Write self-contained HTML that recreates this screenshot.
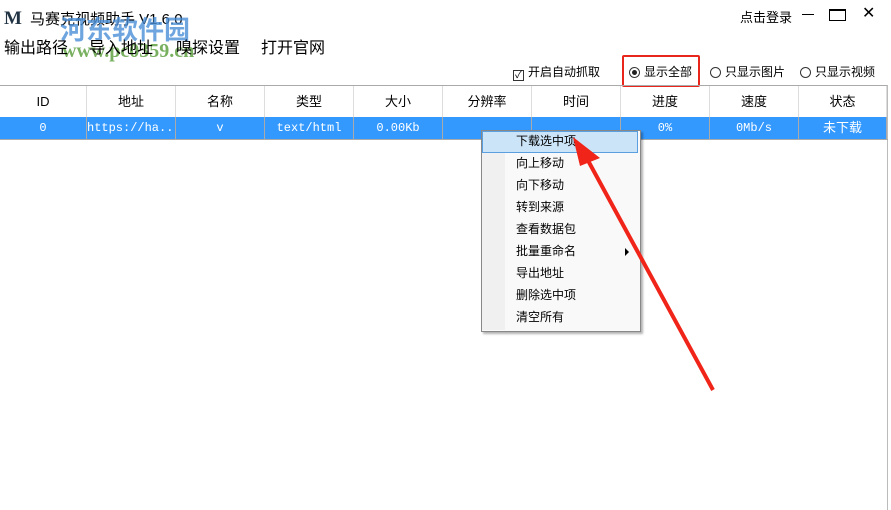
<!DOCTYPE html>
<html><head><meta charset="utf-8"><style>
body{margin:0;width:891px;height:510px;background:#fff;position:relative;overflow:hidden;font-family:"Liberation Sans","Noto Sans CJK SC",sans-serif;color:#000}
.a{position:absolute;white-space:nowrap}
.m{font-size:16px}
.hd{position:absolute;top:86px;height:31px;line-height:31px;text-align:center;font-size:13px;border-right:1px solid #ddd;box-sizing:border-box}
.rw{position:absolute;top:117px;height:22px;line-height:22px;text-align:center;font-size:12px;color:#fff;background:#3399ff;border-right:1px solid #aaa;box-sizing:border-box;font-family:"Liberation Mono","Noto Sans CJK SC",monospace}
.mi{position:absolute;left:516px;font-size:12px;height:22px;line-height:22px}
.rd{display:inline-block;width:11px;height:11px;border:1px solid #333;border-radius:50%;vertical-align:-2px;margin-right:4px;box-sizing:border-box;position:relative}
</style></head><body>
<div class="a" style="left:4px;top:8px;font-size:19px;font-weight:bold;font-family:'Liberation Serif',serif;color:#234">M</div>
<div class="a" style="left:30px;top:8px;font-size:15px">马赛克视频助手 V1.6.0</div>
<div class="a" style="left:60px;top:10px;font-size:26px;font-weight:bold;color:#4a8fd8;opacity:.8">河东软件园</div>
<div class="a" style="left:62px;top:40px;font-size:20px;font-weight:bold;color:#6aa84f;font-family:'Liberation Serif',serif;opacity:.9">www.pc0359.cn</div>
<div class="a m" style="left:4px;top:34px">输出路径</div>
<div class="a m" style="left:89px;top:34px">导入地址</div>
<div class="a m" style="left:176px;top:34px">嗅探设置</div>
<div class="a m" style="left:261px;top:34px">打开官网</div>
<div class="a" style="left:740px;top:7px;font-size:13px">点击登录</div>
<div class="a" style="left:802px;top:14px;width:12px;height:1px;background:#000"></div>
<div class="a" style="left:829px;top:9px;width:15px;height:9px;border:1px solid #000;border-top-width:2px"></div>
<div class="a" style="left:862px;top:3px;font-size:16px">✕</div>
<div class="a" style="left:513px;top:63px;font-size:12px"><span style="display:inline-block;width:11px;height:11px;border:1px solid #333;vertical-align:-2px;margin-right:4px;box-sizing:border-box;font-size:10px;line-height:9px;text-align:center">✓</span>开启自动抓取</div>
<div class="a" style="left:629px;top:63px;font-size:12px"><span class="rd"><span style="position:absolute;left:2px;top:2px;width:5px;height:5px;border-radius:50%;background:#222"></span></span>显示全部</div>
<div class="a" style="left:710px;top:63px;font-size:12px"><span class="rd"></span>只显示图片</div>
<div class="a" style="left:800px;top:63px;font-size:12px"><span class="rd"></span>只显示视频</div>
<div class="a" style="left:622px;top:55px;width:74px;height:28px;border:2px solid #e8261c;border-radius:2px"></div>
<div class="a" style="left:0;top:85px;width:888px;height:1px;background:#aaa"></div>
<div class="a" style="left:887px;top:85px;width:1px;height:425px;background:#bbb"></div>
<div class="hd" style="left:0;width:87px">ID</div><div class="hd" style="left:87px;width:89px">地址</div><div class="hd" style="left:176px;width:89px">名称</div><div class="hd" style="left:265px;width:89px">类型</div><div class="hd" style="left:354px;width:89px">大小</div><div class="hd" style="left:443px;width:89px">分辨率</div><div class="hd" style="left:532px;width:89px">时间</div><div class="hd" style="left:621px;width:89px">进度</div><div class="hd" style="left:710px;width:89px">速度</div><div class="hd" style="left:799px;width:88px">状态</div>
<div class="rw" style="left:0;width:87px">0</div><div class="rw" style="left:87px;width:89px">https://ha...</div><div class="rw" style="left:176px;width:89px">v</div><div class="rw" style="left:265px;width:89px">text/html</div><div class="rw" style="left:354px;width:89px">0.00Kb</div><div class="rw" style="left:443px;width:89px"></div><div class="rw" style="left:532px;width:89px"></div><div class="rw" style="left:621px;width:89px">0%</div><div class="rw" style="left:710px;width:89px">0Mb/s</div><div class="rw" style="left:799px;width:88px;font-family:'Liberation Sans','Noto Sans CJK SC',sans-serif;font-size:13px">未下载</div>
<div class="a" style="left:0;top:139px;width:888px;height:1px;background:#aaa"></div>
<div class="a" style="left:481px;top:130px;width:158px;height:200px;background:#f9f9f9;border:1px solid #888;box-shadow:2px 2px 2px rgba(0,0,0,.3)"></div>
<div class="a" style="left:482px;top:131px;width:23px;height:199px;background:#f0f0f0"></div>
<div class="a" style="left:482px;top:131px;width:154px;height:20px;background:#cce4f7;border:1px solid #5aa0e0"></div>
<div class="mi" style="top:130px">下载选中项</div><div class="mi" style="top:152px">向上移动</div><div class="mi" style="top:174px">向下移动</div><div class="mi" style="top:196px">转到来源</div><div class="mi" style="top:218px">查看数据包</div><div class="mi" style="top:240px">批量重命名</div><div class="mi" style="top:262px">导出地址</div><div class="mi" style="top:284px">删除选中项</div><div class="mi" style="top:306px">清空所有</div>
<div class="a" style="left:625px;top:248px;width:0;height:0;border-left:4px solid #000;border-top:4px solid transparent;border-bottom:4px solid transparent"></div>
<svg class="a" style="left:0;top:0" width="891" height="510"><line x1="713" y1="390" x2="585" y2="155" stroke="#f02418" stroke-width="4"/><polygon points="573,137 600,158 580,166" fill="#f02418"/></svg>
</body></html>
